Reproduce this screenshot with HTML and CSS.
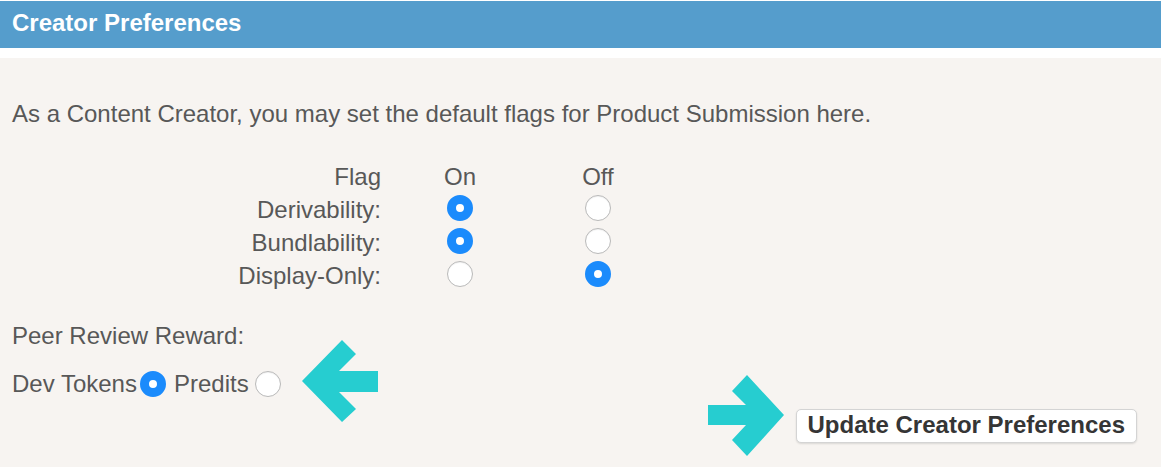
FILE: index.html
```html
<!DOCTYPE html>
<html>
<head>
<meta charset="utf-8">
<link rel="stylesheet" href="styles.css">
</head>
<body>
<div class="page">
  <div class="header">Creator Preferences</div>
  <div class="content">
    <p class="intro">As a Content Creator, you may set the default flags for Product Submission here.</p>
    <div class="flags">
      <div class="lbl">Flag</div><div class="col">On</div><div class="col">Off</div>
      <div class="lbl">Derivability:</div>
      <div class="cell"><input type="radio" class="radio" name="d" checked></div>
      <div class="cell"><input type="radio" class="radio" name="d"></div>
      <div class="lbl">Bundlability:</div>
      <div class="cell"><input type="radio" class="radio" name="b" checked></div>
      <div class="cell"><input type="radio" class="radio" name="b"></div>
      <div class="lbl">Display-Only:</div>
      <div class="cell"><input type="radio" class="radio" name="o"></div>
      <div class="cell"><input type="radio" class="radio" name="o" checked></div>
    </div>
    <div class="reward-title">Peer Review Reward:</div>
    <div class="reward-row">
      <div class="reward-opts">
        <span>Dev Tokens</span><input type="radio" class="radio r1" name="r" checked><span class="predits">Predits</span><input type="radio" class="radio r2" name="r">
      </div>
      <button class="btn">Update Creator Preferences</button>
    </div>
  </div>
  <svg class="arrows" width="1162" height="467" viewBox="0 0 1162 467">
    <polygon fill="#26cdd0" points="302,381 342,340 356,354 339,371 378,371 378,392 339,392 356,409 342,422"/>
    <polygon fill="#26cdd0" points="708,405 746,405 732,391 747,375 784,415 747,456 732,440 746,425 708,425"/>
  </svg>
</div>
</body>
</html>
```
FILE: styles.css
```css
html, body {
  margin: 0;
  padding: 0;
  background: #ffffff;
}
body {
  font-family: "Liberation Sans", Arial, Helvetica, sans-serif;
  width: 1162px;
  height: 467px;
  overflow: hidden;
}
.page {
  position: relative;
  width: 1161px;
  height: 467px;
  padding-top: 1px;
  box-sizing: border-box;
  display: flex;
  flex-direction: column;
}
.header {
  background: #559dcc;
  color: #ffffff;
  font-weight: bold;
  font-size: 24px;
  height: 47px;
  line-height: 43px;
  padding-left: 12px;
  box-sizing: border-box;
}
.content {
  margin-top: 10px;
  background: #f7f4f1;
  flex: 1;
  padding: 42px 24px 0 12px;
  color: #585858;
  font-size: 24px;
  line-height: 28px;
}
.intro {
  margin: 0;
}
.flags {
  display: grid;
  grid-template-columns: 369px 158px 118px;
  grid-auto-rows: 33px;
  margin-top: 32px;
  line-height: 33px;
}
.lbl {
  text-align: right;
}
.col {
  text-align: center;
}
.cell {
  display: flex;
  align-items: center;
  justify-content: center;
  padding-bottom: 3px;
  box-sizing: border-box;
}
.radio {
  -webkit-appearance: none;
  appearance: none;
  width: 26px;
  height: 26px;
  margin: 0;
  border-radius: 50%;
  background: #ffffff;
  border: 1px solid #b9b9b9;
  box-sizing: border-box;
  box-shadow: inset 0 1px 1px rgba(0,0,0,0.06);
}
.radio:checked {
  border: 9px solid #1b8bfc;
  background: #ffffff;
  box-shadow: none;
}
.reward-title {
  margin-top: 30px;
}
.reward-row {
  display: flex;
  justify-content: space-between;
  align-items: flex-start;
  margin-top: 20px;
}
.reward-opts {
  display: flex;
  align-items: center;
  height: 28px;
}
.r1 {
  margin-left: 3px;
}
.predits {
  margin-left: 8px;
}
.r2 {
  margin-left: 6px;
}
.btn {
  margin-top: 39px;
  font-family: "Liberation Sans", Arial, Helvetica, sans-serif;
  font-weight: bold;
  font-size: 24px;
  color: #353535;
  background: #ffffff;
  border: 1px solid #d4d4d4;
  border-radius: 5px;
  height: 34px;
  line-height: 30px;
  padding: 0 11px 2px 11px;
  box-sizing: border-box;
  box-shadow: 0 1px 2px rgba(0,0,0,0.12);
}
.arrows {
  position: absolute;
  top: 0;
  left: 0;
  pointer-events: none;
}
```
